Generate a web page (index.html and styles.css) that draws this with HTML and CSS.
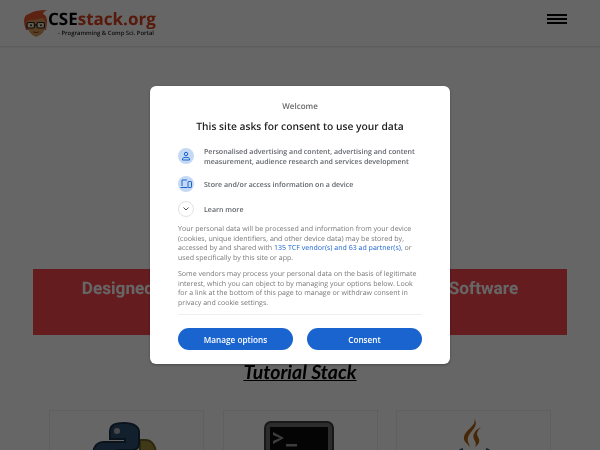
FILE: index.html
```html
<!DOCTYPE html>
<html lang="en">
<head>
  <meta charset="UTF-8">
  <meta name="viewport" content="width=device-width, initial-scale=1.0">
  <title>CSEstack.org</title>
  <link rel="stylesheet" href="styles.css">
</head>
<body>

  <div class="page">
    <!-- Site header -->
    <header class="site-header">
      <div class="logo">
        <svg class="logo-face" width="24" height="27" viewBox="0 0 24 27">
          <path d="M2 20 Q0 15 0 11 Q0 5 5 4 Q10 0 23 0 Q19 2 19 4 Q23 5 23 12 L22 20 Z" fill="#e8552f"/>
          <path d="M2 13 Q3 10 7 10 Q12 10 19 8 Q22 11 22 15 Q21 24 12 27 Q4 24 2 13 Z" fill="#d99a5b"/>
          <rect x="3" y="12.500" width="7.500" height="5.500" rx="1.500" fill="#f4e4c8" stroke="#222" stroke-width="1.200"/>
          <rect x="13" y="12.500" width="7.500" height="5.500" rx="1.500" fill="#f4e4c8" stroke="#222" stroke-width="1.200"/>
          <path d="M10.500 15 H13" stroke="#222" stroke-width="1.200"/>
          <circle cx="7" cy="15.300" r="1" fill="#222"/>
          <circle cx="17" cy="15.300" r="1" fill="#222"/>
          <path d="M9 22 Q12 23 15 22" stroke="#8a4a20" fill="none"/>
        </svg>
        <div class="logo-text">
          <div class="logo-name">CSE<span class="logo-accent">stack.org</span></div>
          <div class="logo-tag">- Programming &amp; Comp Sci. Portal</div>
        </div>
      </div>
      <div class="menu-icon">
        <span></span>
        <span></span>
        <span></span>
      </div>
    </header>

    <!-- Banner -->
    <section class="banner">
      <h2>Designed for Programmers and Students in the Software</h2>
    </section>

    <h1 class="stack-title">Tutorial Stack</h1>

    <!-- Tutorial cards -->
    <div class="cards">
      <div class="card card-shift">
        <svg width="66" height="66" viewBox="0 0 66 66">
          <path d="M46 19 H53 C60 19 64 25 64 33 C64 42 60 47 53 47 H32 V50 H46 V57 C46 62 41 65 33 65 C25 65 19 62 19 57 V46 C19 41 23 37 28 37 H40 C45 37 48 34 48 29 V19 Z" fill="#a08f3a" stroke="#6b5f22" stroke-width="2"/>
          <path d="M32 2 C20 2 18 6 18 11 V18 H33 V21 H12 C5 21 1 26 1 34 C1 42 5 47 11 47 H18 V38 C18 32 22 29 28 29 H40 C45 29 47 26 47 22 V11 C47 6 42 2 32 2 Z" fill="#2e5274" stroke="#1a3148" stroke-width="2"/>
          <circle cx="25" cy="10" r="3" fill="#b5b5b5"/>
        </svg>
      </div>
      <div class="card card-shift">
        <svg width="70" height="66" viewBox="0 0 70 66">
          <rect x="1" y="1" width="68" height="64" rx="6" fill="#6e6e6e" stroke="#3c3c3c" stroke-width="2"/>
          <rect x="6" y="6" width="58" height="54" fill="#0a0a0a"/>
          <path d="M9 11 L20 17 L9 23 V20 L16 17 L9 14 Z" fill="#9a9a9a"/>
          <rect x="22" y="23" width="11" height="2.500" fill="#9a9a9a"/>
        </svg>
      </div>
      <div class="card card-java">
        <svg width="40" height="66" viewBox="0 0 40 66">
          <path d="M19 0 C23 8 8 12 9 21 C9 24 13 26 15 29 C14 25 11 23 14 17 C18 11 24 7 19 0 Z" fill="#b0620f"/>
          <path d="M26 9 C20 12 17 17 19 21 C20 24 22 25 20 29 C25 26 25 22 23 19 C21 16 22 13 26 9 Z" fill="#b0620f"/>
          <path d="M8 31 C2 33 3 36 9 37 M31 31 C37 33 36 36 30 37" fill="none" stroke="#3d5f7d" stroke-width="2"/>
          <path d="M8 41 Q20 45 32 41" fill="none" stroke="#3d5f7d" stroke-width="2"/>
        </svg>
      </div>
    </div>
  </div>

  <!-- Consent dialog -->
  <div class="overlay">
    <div class="dialog">
      <div class="welcome">Welcome</div>
      <div class="dialog-title">This site asks for consent to use your data</div>

      <div class="purpose purpose-first">
        <span class="purpose-icon">
          <svg width="10" height="10" viewBox="0 0 10 10" fill="none" stroke="#1a64d0" stroke-width="1">
            <circle cx="5" cy="3" r="1.700"/>
            <path d="M1.500 9 V7.800 Q1.500 6.300 5 6.300 Q8.500 6.300 8.500 7.800 V9 Z"/>
          </svg>
        </span>
        <span class="purpose-text">Personalised advertising and content, advertising and content<br>measurement, audience research and services development</span>
      </div>
      <div class="purpose">
        <span class="purpose-icon">
          <svg width="12" height="10" viewBox="0 0 12 10" fill="none" stroke="#1a64d0" stroke-width="1">
            <path d="M7 1 H2 V7"/>
            <path d="M.5 8.500 H7.500"/>
            <rect x="8" y="2.500" width="3.500" height="6" rx=".6"/>
          </svg>
        </span>
        <span class="purpose-text">Store and/or access information on a device</span>
      </div>
      <div class="purpose">
        <span class="purpose-icon learn-icon">
          <svg width="8" height="6" viewBox="0 0 8 6" fill="none" stroke="#555" stroke-width="1">
            <path d="M1.500 1.500 L4 4 L6.500 1.500"/>
          </svg>
        </span>
        <span class="purpose-text">Learn more</span>
      </div>

      <p class="note">Your personal data will be processed and information from your device (cookies, unique identifiers, and other device data) may be stored by, accessed by and shared with <a href="#">135 TCF vendor(s) and 63 ad partner(s)</a>, or used specifically by this site or app.</p>
      <p class="note">Some vendors may process your personal data on the basis of legitimate interest, which you can object to by managing your options below. Look for a link at the bottom of this page to manage or withdraw consent in privacy and cookie settings.</p>

      <div class="dialog-buttons">
        <button class="btn">Manage options</button>
        <button class="btn">Consent</button>
      </div>
    </div>
  </div>

</body>
</html>
```

FILE: styles.css
```css
* {
  box-sizing: border-box;
}

html, body {
  height: 100%;
}

body {
  margin: 0;
  background-color: #fff;
  font-family: "Open Sans", sans-serif;
  text-rendering: geometricPrecision;
  overflow: hidden;
}

.page {
  filter: blur(0.4px);
}

/* Site header */
.site-header {
  height: 46px;
  padding: 9px 33px 0 24px;
  display: flex;
  justify-content: space-between;
  align-items: flex-start;
  box-shadow: 0 1px 2px rgba(0, 0, 0, 0.12);
}

.logo {
  display: flex;
  align-items: flex-start;
}

.logo-face {
  margin-top: 1px;
}

.logo-name {
  font-size: 17px;
  font-weight: bold;
  line-height: 20px;
  color: #000;
}

.logo-accent {
  color: #d8401c;
}

.logo-tag {
  font-size: 5.900px;
  font-weight: 600;
  line-height: 8px;
  margin-left: 10px;
  color: #222;
}

.menu-icon {
  width: 20px;
  margin-top: 5px;
  display: flex;
  flex-direction: column;
  gap: 2px;
}

.menu-icon span {
  height: 2px;
  background-color: #000;
}

/* Banner */
.banner {
  margin: 223px 33px 0;
  height: 66px;
  padding-top: 8px;
  background-color: #fd474e;
  text-align: center;
}

.banner h2 {
  margin: 0;
  font-family: Roboto, sans-serif;
  font-size: 17.200px;
  font-weight: bold;
  line-height: 24px;
  color: #fff;
}

.stack-title {
  margin: 25.500px 0 0;
  font-family: Lato, sans-serif;
  font-size: 19.500px;
  font-style: italic;
  font-weight: bold;
  line-height: 24px;
  text-align: center;
  text-decoration: underline;
  color: #000;
}

/* Tutorial cards */
.cards {
  margin: 25.500px 49px 0;
  display: grid;
  grid-template-columns: repeat(3, 155px);
  justify-content: space-between;
}

.card {
  height: 120px;
  padding-top: 10px;
  border: 1px solid #eee;
  text-align: center;
}

.card-shift {
  padding-right: 3px;
}

.card-java {
  padding-top: 7px;
  padding-left: 3px;
}

/* Consent dialog */
.overlay {
  position: fixed;
  inset: 0;
  background-color: rgba(0, 0, 0, 0.6);
  display: flex;
  align-items: center;
  justify-content: center;
}

.dialog {
  width: 300px;
  height: 278px;
  padding: 15px 28px 0;
  background-color: #fff;
  border-radius: 6px;
  box-shadow: 0 1px 3px rgba(0, 0, 0, 0.3);
  filter: blur(0.3px);
}

.welcome {
  font-size: 8px;
  font-weight: 600;
  line-height: 12px;
  text-align: center;
  color: #666;
}

.dialog-title {
  margin-top: 6px;
  font-size: 10.250px;
  font-weight: 600;
  line-height: 16px;
  text-align: center;
  color: #222;
}

.purpose {
  display: flex;
  align-items: center;
  min-height: 16px;
  margin-top: 9px;
}

.purpose-first {
  margin-top: 10px;
}

.purpose-icon {
  flex: none;
  width: 16px;
  height: 16px;
  margin-right: 10px;
  border-radius: 50%;
  background-color: #c5d9f5;
  display: flex;
  align-items: center;
  justify-content: center;
}

.learn-icon {
  background-color: #fff;
  border: 1px solid #e2e2e2;
}

.purpose-text {
  margin-top: 3px;
  font-size: 7.050px;
  font-weight: 600;
  line-height: 9.500px;
  color: #5f6368;
  white-space: nowrap;
}

.note {
  margin: 8px 0 0;
  font-size: 7.050px;
  line-height: 9.500px;
  color: #777;
}

.note + .note {
  margin-top: 7px;
}

.note a {
  color: #1a64d0;
  text-decoration: none;
}

.dialog-buttons {
  margin-top: 6px;
  padding-top: 13px;
  border-top: 1px solid #eee;
  display: flex;
  justify-content: space-between;
}

.btn {
  width: 115px;
  height: 22px;
  padding: 0;
  border: none;
  border-radius: 11px;
  background-color: #1a64d0;
  color: #fff;
  font-family: "Open Sans", sans-serif;
  font-size: 8.200px;
  font-weight: 600;
}
```
